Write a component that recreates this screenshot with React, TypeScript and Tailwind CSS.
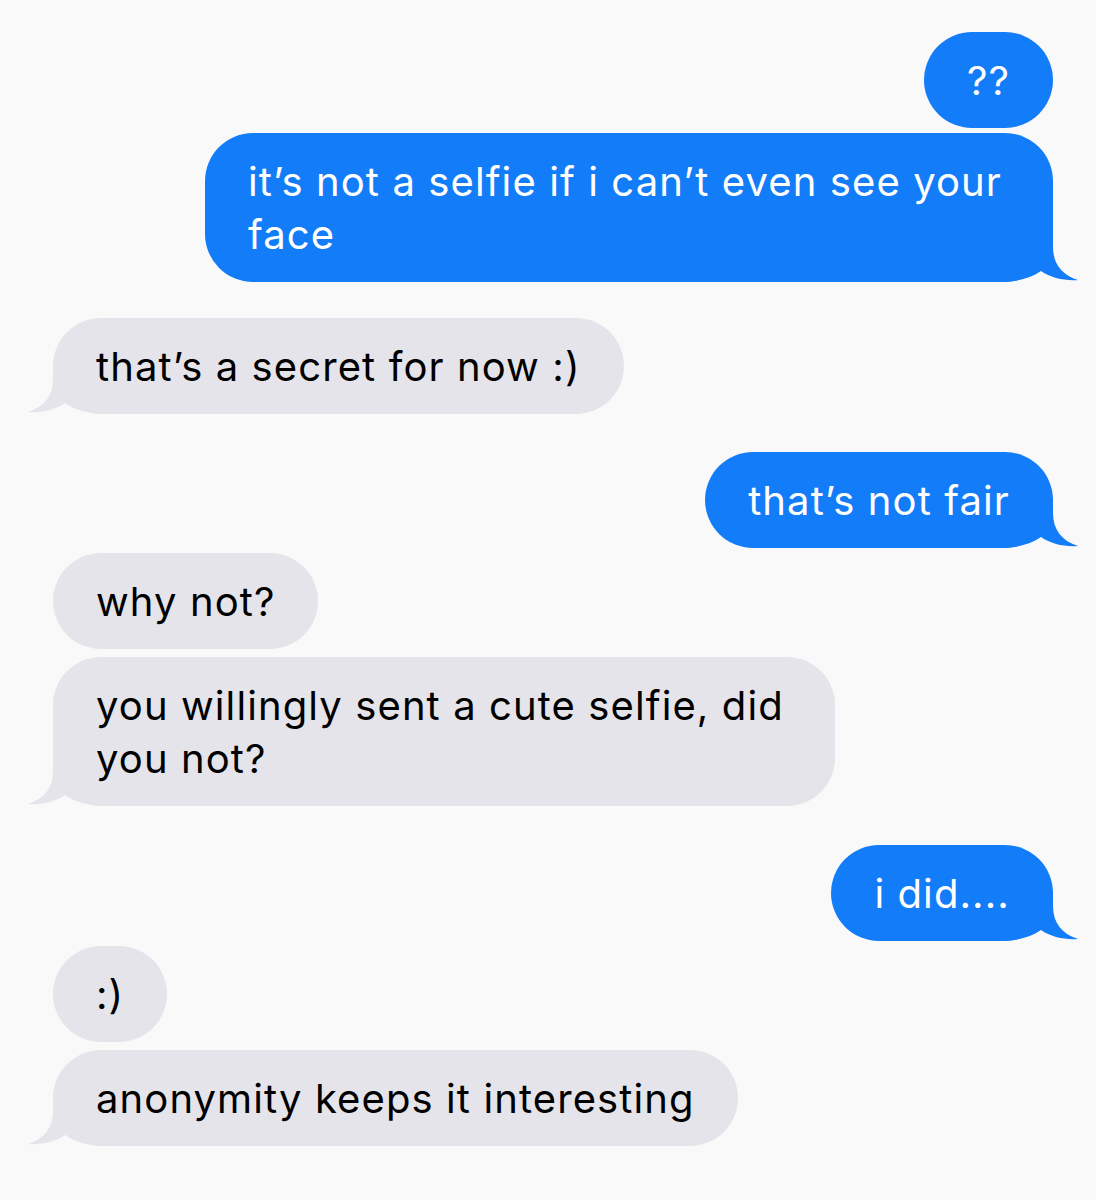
import React from "react";

type Msg = {
  id: number;
  text: React.ReactNode;
  me: boolean;
  tail: boolean;
  mt: string;
  wide?: boolean;
};

const messages: Msg[] = [
  { id: 1, text: "??", me: true, tail: false, mt: "mt-[32px]" },
  {
    id: 2,
    text: (
      <>
        it’s not a selfie if i can’t even see your
        <br />
        face
      </>
    ),
    me: true,
    tail: true,
    mt: "mt-[5px]",
    wide: true,
  },
  { id: 3, text: "that’s a secret for now :)", me: false, tail: true, mt: "mt-[36px]" },
  { id: 4, text: "that’s not fair", me: true, tail: true, mt: "mt-[38px]" },
  { id: 5, text: "why not?", me: false, tail: false, mt: "mt-[5px]" },
  {
    id: 6,
    text: (
      <>
        you willingly sent a cute selfie, did
        <br />
        you not?
      </>
    ),
    me: false,
    tail: true,
    mt: "mt-[8px]",
    wide: true,
  },
  { id: 7, text: "i did....", me: true, tail: true, mt: "mt-[39px]" },
  { id: 8, text: ":)", me: false, tail: false, mt: "mt-[5px]" },
  { id: 9, text: "anonymity keeps it interesting", me: false, tail: true, mt: "mt-[8px]" },
];

function Tail({ me }: { me: boolean }) {
  return (
    <svg
      viewBox="0 0 80 50"
      width={80}
      height={50}
      className={
        me
          ? "absolute bottom-0 right-[-26px]"
          : "absolute bottom-0 left-[-26px] -scale-x-100"
      }
    >
      <path
        d="M0 0 L54 0 L54 15 C54 32 63 43 79 48 C66 49 52 46 42 39 C32 46 18 50 0 50 Z"
        fill={me ? "#137cf8" : "#e5e4ea"}
      />
    </svg>
  );
}

export default function App() {
  return (
    <div
      className="min-h-[1200px] w-full bg-[#f9f9f9] pl-[53px] pr-[43px]"
      style={{ fontFamily: "Inter, 'Liberation Sans', sans-serif" }}
    >
      <div className="flex flex-col">
        {messages.map((m) => (
          <div
            key={m.id}
            className={`${m.mt} flex ${m.me ? "justify-end" : "justify-start"}`}
          >
            <div
              className={`relative whitespace-nowrap rounded-[48px] py-[21.5px] pl-[43px] text-[40px] leading-[53px] tracking-[1.1px] ${
                m.wide ? "pr-[51px]" : "pr-[43px]"
              } ${m.me ? "bg-[#137cf8] text-white" : "bg-[#e5e4ea] text-black"}`}
            >
              {m.tail && <Tail me={m.me} />}
              <span className="relative">{m.text}</span>
            </div>
          </div>
        ))}
      </div>
    </div>
  );
}
